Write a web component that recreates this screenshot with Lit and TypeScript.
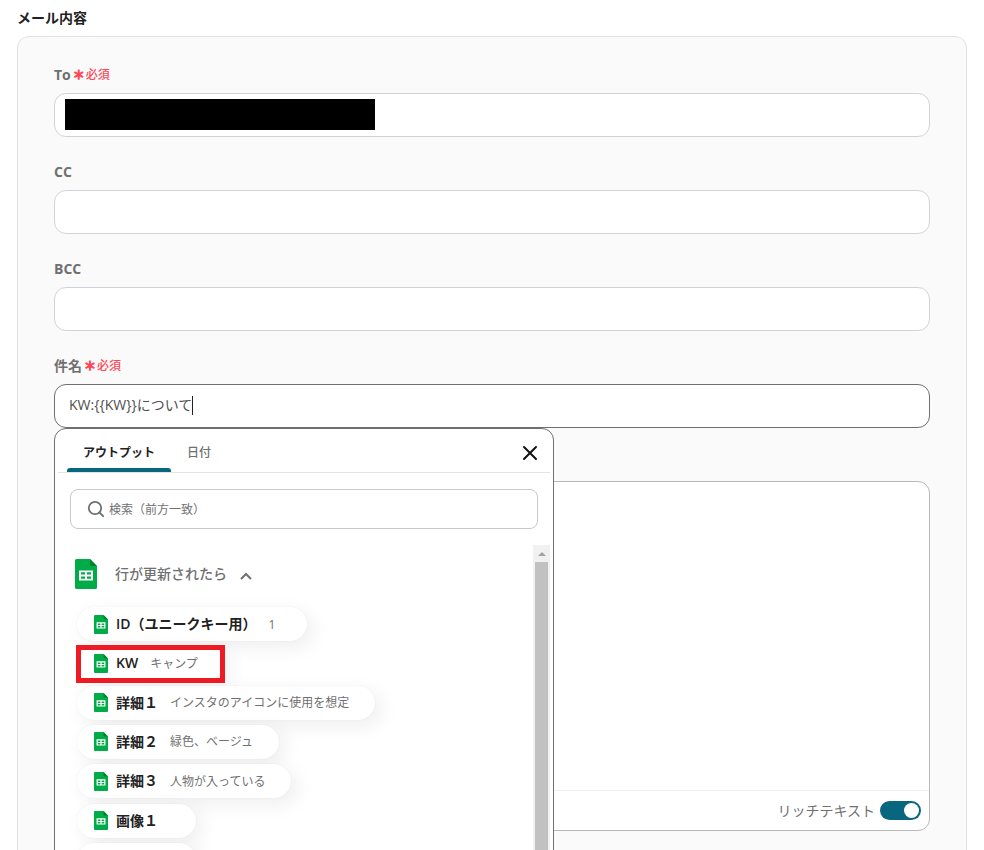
import { LitElement, html, css, svg, nothing } from "lit";
import { customElement, property, state } from "lit/decorators.js";
import { classMap } from "lit/directives/class-map.js";

interface OutputItem {
  name: string;
  value?: string;
  marked?: boolean;
}

const OUTPUTS: OutputItem[] = [
  { name: "ID（ユニークキー用）", value: "1" },
  { name: "KW", value: "キャンプ", marked: true },
  { name: "詳細１", value: "インスタのアイコンに使用を想定" },
  { name: "詳細２", value: "緑色、ベージュ" },
  { name: "詳細３", value: "人物が入っている" },
  { name: "画像１" },
  { name: "" },
];

const sheetShape = svg`
  <path d="M1.500 0H15l7 7v21.500a1.500 1.500 0 0 1-1.500 1.500h-19A1.500 1.500 0 0 1 0 28.500v-27A1.500 1.500 0 0 1 1.500 0z" fill="#00ac47"/>
  <path d="M15 0l7 7h-5.500A1.500 1.500 0 0 1 15 5.500z" fill="#00832d"/>
  <path fill-rule="evenodd" d="M4 11.500h14v10H4zM6 13.300v2.300h4v-2.300zM12 13.300v2.300h4v-2.300zM6 17.500v2.200h4v-2.200zM12 17.500v2.200h4v-2.200z" fill="#fff"/>`;

@customElement("sheet-icon")
export class SheetIcon extends LitElement {
  static styles = css`
    :host { display: block; flex: none; }
    svg { display: block; width: 100%; height: 100%; }
  `;
  render() {
    return html`<svg viewBox="0 0 22 30" preserveAspectRatio="none" aria-hidden="true">${sheetShape}</svg>`;
  }
}

@customElement("output-picker")
export class OutputPicker extends LitElement {
  @property({ attribute: false }) items: OutputItem[] = [];
  @state() private tab = 0;

  static styles = css`
    :host {
      display: block;
      box-sizing: border-box;
      padding: 0 3px;
      border: 1px solid #707070;
      border-radius: 12px;
      background: #fff;
      color: #707070;
    }
    button, input { font: inherit; color: inherit; margin: 0; }
    button { border: 0; background: none; padding: 0; cursor: pointer; }
    .head {
      display: flex;
      align-items: stretch;
      height: 43px;
      padding: 0 9px;
      border-bottom: 1px solid #e4e4e4;
    }
    .tab {
      position: relative;
      padding: 0 16px;
      height: 43px;
      line-height: 47px;
      font-size: 12px;
      font-weight: 500;
    }
    .tab.active { color: #222; font-weight: 700; }
    .tab.active::after {
      content: "";
      position: absolute;
      inset: auto 0 0;
      height: 4px;
      border-radius: 3px 3px 0 0;
      background: #08677f;
    }
    .close { margin: 4px 3px 0 auto; align-self: center; width: 16px; height: 16px; }
    svg { display: block; }
    .search {
      display: flex;
      align-items: center;
      gap: 4px;
      box-sizing: border-box;
      height: 40px;
      margin: 16px 12px;
      padding: 0 16px;
      border: 1px solid #c8c8c8;
      border-radius: 8px;
    }
    .search input {
      flex: 1;
      min-width: 0;
      padding: 2px 0 0;
      border: 0;
      outline: 0;
      background: none;
      font-size: 12px;
    }
    .search input::placeholder { color: #707070; }
    .body { display: flex; height: 400px; }
    .list { flex: 1; padding: 14px 0 0 17px; }
    .group { display: flex; align-items: center; height: 30px; font-size: 14px; font-weight: 500; }
    .group sheet-icon { width: 22px; height: 30px; margin-right: 18px; }
    .group svg { margin: 4px 0 0 13px; }
    .chips {
      display: flex;
      flex-direction: column;
      align-items: flex-start;
      justify-content: space-between;
      height: 270px;
      margin: 18px 0 0 2px;
      padding: 0;
      list-style: none;
    }
    .item { position: relative; }
    .chip {
      display: flex;
      align-items: center;
      min-width: 119px;
      height: 34px;
      padding: 0 26px 0 17px;
      border-radius: 17px;
      background: #fff;
      box-shadow: 0 0 2px rgba(0, 0, 0, 0.06), 6px 6px 20px rgba(0, 0, 0, 0.07);
    }
    .chip sheet-icon { width: 14px; height: 19px; margin-right: 8px; }
    .name { color: #222; font-size: 14px; font-weight: 600; margin-right: 12px; }
    .value { min-width: 12px; padding-top: 1px; font-size: 12px; text-align: left; }
    .mark {
      position: absolute;
      inset: -1px -1px -3px;
      border: 5px solid #ed1c24;
      pointer-events: none;
    }
    .scrollbar {
      display: flex;
      flex-direction: column;
      align-items: center;
      width: 17px;
      background: #f1f1f1;
    }
    .scrollbar svg { margin: 5px 0 4px; height: 8px; }
    .thumb { width: 13px; flex: 1; background: #c1c1c1; }
  `;

  render() {
    return html`
      <div class="head" role="tablist">
        ${["アウトプット", "日付"].map(
          (label, i) => html`<button
            role="tab"
            aria-selected=${this.tab === i}
            class=${classMap({ tab: true, active: this.tab === i })}
            @click=${() => (this.tab = i)}
          >${label}</button>`
        )}
        <button class="close" aria-label="閉じる">
          <svg width="16" height="16" viewBox="0 0 16 16" fill="none" stroke="#111" stroke-width="2" stroke-linecap="round">
            <path d="M2 2l12 12M14 2L2 14" />
          </svg>
        </button>
      </div>
      <label class="search">
        <svg width="18" height="18" viewBox="0 0 18 18" fill="none" stroke="#707070" stroke-width="1.800">
          <circle cx="8" cy="8" r="6.200" /><path d="M12.500 12.500l3.700 3.700" stroke-linecap="round" />
        </svg>
        <input type="text" placeholder="検索（前方一致）" aria-label="検索" />
      </label>
      <div class="body">
        <div class="list">
          <button class="group" aria-expanded="true">
            <sheet-icon></sheet-icon>行が更新されたら
            <svg width="12" height="8" viewBox="0 0 12 8" fill="none" stroke="#707070" stroke-width="2">
              <path d="M1 7l5-5 5 5" />
            </svg>
          </button>
          <ul class="chips">
            ${this.items.map(
              (o) => html`<li class="item">
                <button class="chip">
                  <sheet-icon></sheet-icon><span class="name">${o.name}</span>${o.value
                    ? html`<span class="value">${o.value}</span>`
                    : nothing}
                </button>
                ${o.marked ? html`<span class="mark"></span>` : nothing}
              </li>`
            )}
          </ul>
        </div>
        <div class="scrollbar" aria-hidden="true">
          <svg width="8" height="8" viewBox="0 0 8 8"><path d="M0 6l4-4 4 4z" fill="#a3a3a3" /></svg>
          <div class="thumb"></div>
        </div>
      </div>
    `;
  }
}

@customElement("app-root")
export class AppRoot extends LitElement {
  @state() private rich = true;

  static styles = css`
    :host {
      display: block;
      box-sizing: border-box;
      height: 100vh;
      overflow: hidden;
      padding: 8px 17px 0;
      background: #fff;
      color: #707070;
      font-family: "Open Sans", "Noto Sans CJK JP", sans-serif;
      font-size: 14px;
      line-height: 20px;
    }
    input, textarea { font: inherit; color: inherit; margin: 0; padding: 0; border: 0; outline: 0; background: none; }
    .title { margin: 0 0 8px; font-size: 14px; line-height: 20px; color: #222; }
    .card {
      display: flex;
      flex-direction: column;
      gap: 25px;
      padding: 28px 36px 36px;
      border: 1px solid #e3e3e6;
      border-radius: 12px;
      background: #fafafa;
    }
    .field { position: relative; }
    .label { display: flex; align-items: center; height: 20px; margin-bottom: 8px; font-weight: 700; }
    .required { display: flex; align-items: center; gap: 1px; margin-left: 2px; color: #ff4757; font-size: 12px; font-weight: 500; }
    .star { padding-top: 2px; -webkit-text-stroke: 1px currentColor; }
    .control {
      display: flex;
      align-items: center;
      box-sizing: border-box;
      height: 44px;
      padding: 0 14px;
      border: 1px solid #d0d3d9;
      border-radius: 12px;
      background: #fff;
    }
    .control input { flex: 1; min-width: 0; color: #505050; }
    .control.focused { border-color: #707070; padding-bottom: 2px; }
    .control.focused input { flex: none; field-sizing: content; }
    .caret { width: 1px; height: 19px; background: #222; }
    .control.redacted { padding: 0 10px 2px; }
    .control.redacted input { flex: 0 1 310px; height: 31px; background: #000; color: #000; }
    .picker { position: absolute; top: 100%; left: 0; width: 500px; max-width: 100%; z-index: 1; }
    .editor {
      display: flex;
      flex-direction: column;
      box-sizing: border-box;
      height: 350px;
      margin-top: 28px;
      border: 1px solid #b8b8b8;
      border-radius: 12px;
      background: #fff;
    }
    .editor textarea { flex: 1; padding: 12px; resize: none; }
    .foot {
      display: flex;
      align-items: center;
      justify-content: flex-end;
      gap: 5px;
      height: 39px;
      padding: 0 8px;
      border-top: 1px solid #f0f0f0;
    }
    .switch {
      appearance: none;
      display: flex;
      align-items: center;
      box-sizing: border-box;
      width: 41px;
      height: 19px;
      padding: 0 2px;
      border-radius: 10px;
      background: #bbb;
    }
    .switch::before { content: ""; width: 15px; height: 15px; border-radius: 50%; background: #fff; }
    .switch:checked { justify-content: flex-end; background: #08677f; }
  `;

  private label(id: string, text: string, required = false) {
    return html`<label class="label" for=${id}>${text}${required
      ? html`<span class="required"><span class="star">＊</span>必須</span>`
      : nothing}</label>`;
  }

  render() {
    return html`
      <h2 class="title">メール内容</h2>
      <section class="card">
        <div class="field">
          ${this.label("to", "To", true)}
          <div class="control redacted"><input id="to" type="text" /></div>
        </div>
        <div class="field">
          ${this.label("cc", "CC")}
          <div class="control"><input id="cc" type="text" /></div>
        </div>
        <div class="field">
          ${this.label("bcc", "BCC")}
          <div class="control"><input id="bcc" type="text" /></div>
        </div>
        <div class="field">
          ${this.label("subject", "件名", true)}
          <div class="control focused">
            <input id="subject" type="text" .value=${"KW:{{KW}}について"} /><span class="caret"></span>
          </div>
          <output-picker class="picker" .items=${OUTPUTS}></output-picker>
        </div>
        <div class="editor">
          <textarea aria-label="本文"></textarea>
          <div class="foot">
            <label for="rich">リッチテキスト</label>
            <input
              id="rich"
              class="switch"
              type="checkbox"
              role="switch"
              .checked=${this.rich}
              @change=${(e: Event) => (this.rich = (e.target as HTMLInputElement).checked)}
            />
          </div>
        </div>
      </section>
    `;
  }
}
